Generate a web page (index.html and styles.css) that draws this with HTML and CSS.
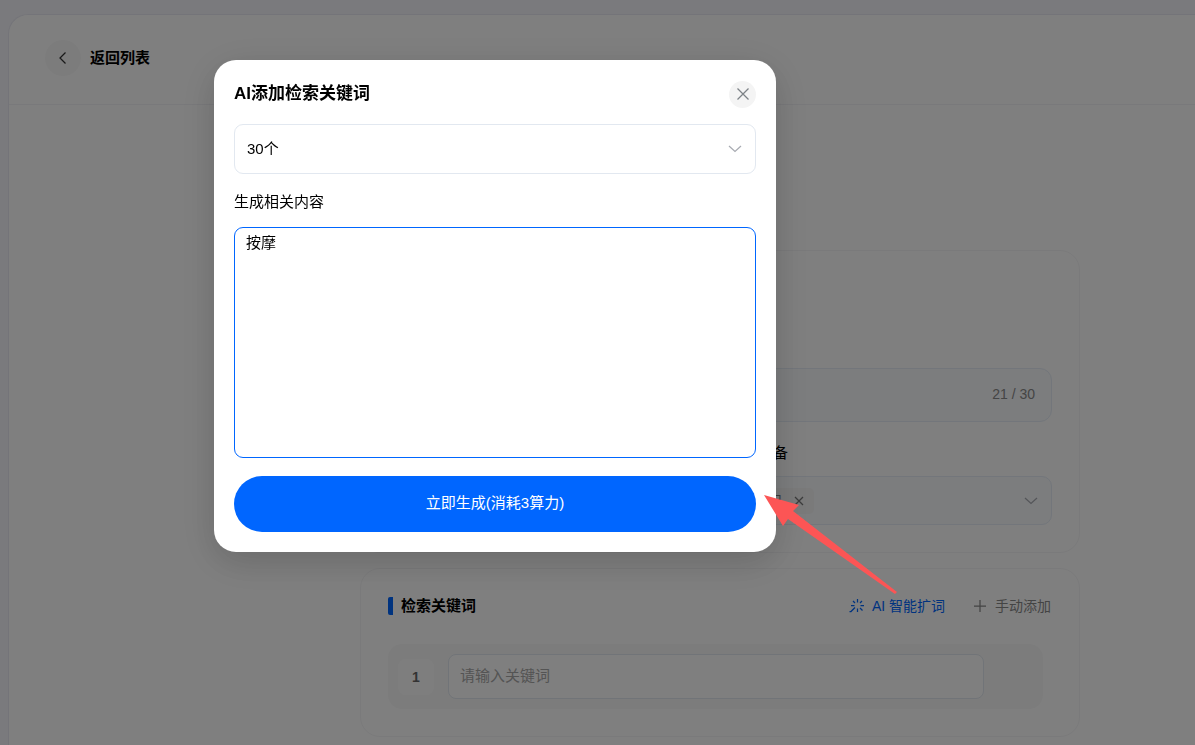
FILE: index.html
```html
<!DOCTYPE html>
<html lang="zh-CN">
<head>
<meta charset="utf-8">
<title>AI添加检索关键词</title>
<link rel="stylesheet" href="styles.css">
</head>
<body>
<div class="app">
  <header class="app-header">
    <button class="back" type="button" aria-label="返回">
      <svg width="14" height="14" viewBox="0 0 14 14"><path d="M9.500 1.500 4 7l5.500 5.500"/></svg>
    </button>
    <h1 class="app-title">返回列表</h1>
  </header>
  <main class="content">
    <section class="card form-card">
      <div class="counter-box">21 / 30</div>
      <div class="field-label">备</div>
      <div class="tag-select">
        <span class="tag">用
          <svg width="10" height="10" viewBox="0 0 10 10"><path d="m1 1 8 8M9 1 1 9"/></svg>
        </span>
        <svg class="chevron" width="14" height="14" viewBox="0 0 14 14"><path d="m1 4 6 5.500 6-5.500"/></svg>
      </div>
    </section>
    <section class="card">
      <div class="card-head">
        <h2 class="card-title">检索关键词</h2>
        <button class="link link-primary" type="button">
          <svg width="16" height="16" viewBox="0 0 16 16"><path d="M8.500 1v3.500M4 3l2 2M13 3l-2 2M2 7.500h3.500M11.500 7.500H15M11 10l2.500 2.500M8.500 10.500V14M6 9.500 2 13.500H0.500"/></svg>
          AI 智能扩词
        </button>
        <button class="link" type="button">
          <svg width="14" height="14" viewBox="0 0 14 14"><path d="M7 1v12M1 7h12"/></svg>
          手动添加
        </button>
      </div>
      <div class="keyword-row">
        <span class="index">1</span>
        <input class="keyword" type="text" aria-label="关键词" placeholder="请输入关键词">
      </div>
    </section>
  </main>
</div>
<div class="overlay">
  <div class="modal" role="dialog" aria-labelledby="modal-title">
    <div class="modal-head">
      <h2 class="modal-title" id="modal-title">AI添加检索关键词</h2>
      <button class="close" type="button" aria-label="关闭">
        <svg width="14" height="14" viewBox="0 0 14 14"><path d="m1.500 1.500 11 11M12.500 1.500l-11 11"/></svg>
      </button>
    </div>
    <div class="select-wrap">
      <select class="count" aria-label="数量"><option>30个</option></select>
      <svg class="chevron select-arrow" width="14" height="14" viewBox="0 0 14 14"><path d="m1 4 6 5.500 6-5.500"/></svg>
    </div>
    <label class="modal-label" for="topic">生成相关内容</label>
    <textarea class="topic" id="topic">按摩</textarea>
    <button class="submit" type="button">立即生成(消耗3算力)</button>
  </div>
  <svg class="arrow" width="134" height="100" viewBox="0 0 134 100"><path d="M0 0 35 10 29 16 133 97 131 99 24 24 19 31Z"/></svg>
</div>
</body>
</html>
```
FILE: styles.css
```css
* { box-sizing: border-box; }

body {
  margin: 0;
  min-height: 100vh;
  overflow: hidden;
  background: #f4f4fa;
  color: #000;
  font: 15px/20px "Liberation Sans", "Noto Sans CJK SC", sans-serif;
}

button, input, textarea, select { font: inherit; color: inherit; }
button { border: 0; padding: 0; background: none; }
h1, h2 { margin: 0; }
svg { fill: none; stroke: currentColor; stroke-width: 1.25; flex: none; }

.app {
  margin: 14px 0 0 8px;
  min-height: calc(100vh - 14px);
  border: 1px solid #e9e9f2;
  border-width: 1px 0 0 1px;
  border-radius: 20px 0 0 0;
  background: #fff;
}
.app-header {
  display: flex;
  align-items: center;
  gap: 9px;
  height: 90px;
  padding: 0 36px 3px;
  border-bottom: 1px solid #f3f3f6;
}
.back {
  display: grid;
  place-items: center;
  width: 36px;
  height: 36px;
  border-radius: 50%;
  background: #f9f9f9;
  color: #333;
}
.app-title { font-size: 15px; }

.content {
  display: grid;
  gap: 15px;
  padding: 145px 115px 0 351px;
}
.card {
  padding: 27px;
  border: 1px solid #f5f5f7;
  border-radius: 20px;
}
.form-card { padding-top: 117px; }
.counter-box {
  display: flex;
  align-items: center;
  justify-content: flex-end;
  height: 54px;
  padding: 0 16px 2px;
  border: 1px solid #e6edf6;
  border-radius: 12px;
  background: #f8fafd;
  color: #8a8a8a;
  font-size: 14px;
}
.field-label { padding: 21px 0 13px 385px; }
.tag-select {
  display: flex;
  align-items: center;
  justify-content: space-between;
  height: 49px;
  padding: 0 13px 0 368px;
  border: 1px solid #e6edf6;
  border-radius: 10px;
  background: #f8fafd;
}
.tag {
  display: flex;
  align-items: center;
  gap: 12px;
  padding: 3px 10px 3px 11px;
  border-radius: 5px;
  background: #f4f4f5;
  color: #777;
  font-size: 14px;
}
.chevron { color: #a8abb2; }

.card-head {
  display: flex;
  align-items: center;
  gap: 28px;
}
.card-title {
  flex: 1;
  padding-left: 8px;
  border-left: 5px solid #0066ff;
  border-radius: 2px;
  font-size: 15px;
  line-height: 18px;
}
.link {
  display: flex;
  align-items: center;
  gap: 8px;
  padding-right: 1px;
  color: #888;
  font-size: 14px;
}
.link-primary { gap: 7px; padding: 0; color: #0066ff; }
.keyword-row {
  display: flex;
  align-items: center;
  gap: 14px;
  margin: 28px 9px 0 0;
  padding: 10px 59px 10px 10px;
  border-radius: 14px;
  background: #f9f9f9;
}
.index {
  width: 36px;
  border-radius: 8px;
  background: #fdfdfd;
  color: #666;
  font-size: 14px;
  font-weight: 700;
  line-height: 36px;
  text-align: center;
}
.keyword {
  flex: 1;
  min-width: 0;
  height: 45px;
  padding: 0 11px 2px;
  border: 1px solid #e2e8f0;
  border-radius: 8px;
  background: #fff;
}
.keyword::placeholder { color: #a8a8a8; }

.overlay {
  position: fixed;
  inset: 0;
  padding: 60px 0 0 214px;
  background: rgba(0, 0, 0, .5);
}
.modal {
  display: flex;
  flex-direction: column;
  width: 562px;
  max-width: 100%;
  padding: 20px;
  border-radius: 22px;
  background: #fff;
  box-shadow: 0 12px 32px 4px rgba(0, 0, 0, .06), 0 8px 40px rgba(0, 0, 0, .12);
}
.modal-head {
  display: flex;
  align-items: center;
  justify-content: space-between;
  height: 28px;
  margin-bottom: 16px;
}
.modal-title { font-size: 17px; }
.close {
  display: grid;
  place-items: center;
  width: 27px;
  height: 27px;
  border-radius: 50%;
  background: #f4f4f4;
  color: #7d8287;
}
.select-wrap { display: grid; align-items: center; }
.select-wrap > * { grid-area: 1 / 1; }
.select-arrow { justify-self: end; margin-right: 14px; pointer-events: none; }
.count {
  appearance: none;
  height: 50px;
  padding: 0 12px;
  border: 1px solid #e2e8f0;
  border-radius: 9px;
  background: #fff;
}
.modal-label { margin: 18px 0 15px; }
.topic {
  height: 231px;
  padding: 5px 11px;
  border: 1px solid #0066ff;
  border-radius: 9px;
  outline: 0;
  resize: none;
  background: #fff;
}
.submit {
  height: 56px;
  margin-top: 18px;
  padding-bottom: 2px;
  border-radius: 28px;
  background: #0066ff;
  color: #fff;
}
.arrow {
  position: absolute;
  left: 764px;
  top: 495px;
  fill: #fc5555;
  stroke: none;
}
```
